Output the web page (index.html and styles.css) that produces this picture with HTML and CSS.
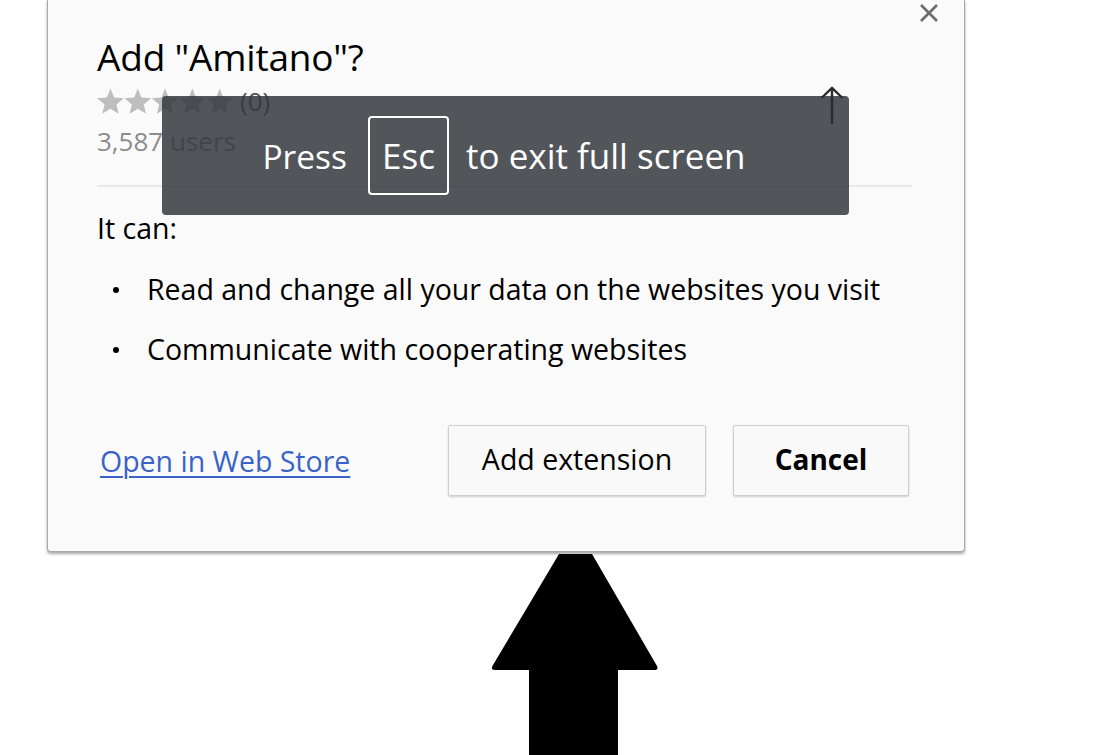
FILE: index.html
```html
<!DOCTYPE html>
<html lang="en">
<head>
<meta charset="utf-8">
<title>Add "Amitano"?</title>
<link rel="stylesheet" href="styles.css">
</head>
<body>
<div class="page">
  <div class="dialog">
    <button class="close" aria-label="Close">
      <svg width="20" height="20" viewBox="0 0 20 20"><path d="M2 2 L18 18 M18 2 L2 18" stroke="#6b6b6b" stroke-width="2.6" fill="none"/></svg>
    </button>
    <h1 class="title">Add "Amitano"?</h1>
    <div class="rating">
      <svg class="stars" width="137" height="27" viewBox="0 0 137 27">
        <g fill="#bdbdbd">
          <path d="M13.5 0.5 L17.1 9.5 L26.8 10.2 L19.4 16.4 L21.7 25.8 L13.5 20.7 L5.3 25.8 L7.6 16.4 L0.2 10.2 L9.9 9.5 Z"/>
          <path d="M13.5 0.5 L17.1 9.5 L26.8 10.2 L19.4 16.4 L21.7 25.8 L13.5 20.7 L5.3 25.8 L7.6 16.4 L0.2 10.2 L9.9 9.5 Z" transform="translate(27.3 0)"/>
          <path d="M13.5 0.5 L17.1 9.5 L26.8 10.2 L19.4 16.4 L21.7 25.8 L13.5 20.7 L5.3 25.8 L7.6 16.4 L0.2 10.2 L9.9 9.5 Z" transform="translate(54.6 0)"/>
          <path d="M13.5 0.5 L17.1 9.5 L26.8 10.2 L19.4 16.4 L21.7 25.8 L13.5 20.7 L5.3 25.8 L7.6 16.4 L0.2 10.2 L9.9 9.5 Z" transform="translate(81.9 0)"/>
          <path d="M13.5 0.5 L17.1 9.5 L26.8 10.2 L19.4 16.4 L21.7 25.8 L13.5 20.7 L5.3 25.8 L7.6 16.4 L0.2 10.2 L9.9 9.5 Z" transform="translate(109.2 0)"/>
        </g>
      </svg>
      <span class="count">(0)</span>
    </div>
    <div class="users">3,587 users</div>
    <hr class="sep">
    <p class="can">It can:</p>
    <ul class="perms">
      <li>Read and change all your data on the websites you visit</li>
      <li>Communicate with cooperating websites</li>
    </ul>
    <div class="footer">
      <a class="store" href="#">Open in Web Store</a>
      <div class="buttons">
        <button class="btn">Add extension</button>
        <button class="btn btn-bold">Cancel</button>
      </div>
    </div>

    <div class="toast">
      <span class="press">Press</span>
      <span class="key">Esc</span>
      <span class="exit">to exit full screen</span>
    </div>
    <svg class="pointer" width="24" height="40" viewBox="0 0 24 40"><path d="M12 2 V38 M1.5 12 L12 2 L22.5 12" stroke="#2b2b2b" stroke-width="2.4" fill="none"/></svg>
  </div>

  <div class="big-arrow">
    <svg width="170" height="205" viewBox="0 0 170 205"><path d="M68 2 L101 2 L166 114 Q168 118 163 118 L127 118 L127 205 L38 205 L38 118 L4 118 Q-1 118 2 113 Z" fill="#000"/></svg>
  </div>
</div>
</body>
</html>
```

FILE: styles.css
```css
* { box-sizing: border-box; }
html, body { margin: 0; padding: 0; background: #ffffff; }
body {
  font-family: "Open Sans", "Noto Sans", "Liberation Sans", sans-serif;
  color: #000;
  overflow: hidden;
  width: 1109px;
  height: 755px;
}
.page { width: 1109px; }

.dialog {
  position: relative;
  margin-left: 47px;
  width: 918px;
  height: 552px;
  background: #fafafa;
  border: 1px solid #a9a9a9;
  border-top: none;
  border-radius: 0 0 4px 4px;
  box-shadow: 0 2px 3px rgba(0,0,0,0.35);
  padding: 0 55px 0 49px;
}

.close {
  position: absolute;
  top: 2px;
  right: 24px;
  width: 22px;
  height: 22px;
  padding: 0;
  border: none;
  background: transparent;
  display: flex;
  align-items: center;
  justify-content: center;
}

.title {
  margin: 0;
  padding-top: 33px;
  font-size: 37px;
  font-weight: 400;
  line-height: 48px;
  letter-spacing: -0.2px;
}

.rating {
  display: flex;
  align-items: center;
  gap: 6px;
  height: 27px;
  margin-top: 7px;
}
.stars { display: block; }
.count { font-size: 26px; color: #555; line-height: 27px; }

.users {
  margin-top: 10px;
  font-size: 26px;
  color: #8c8c8c;
  line-height: 32px;
}

.sep {
  margin: 28px -3px 0 0;
  border: none;
  border-top: 2px solid #e8e8e8;
  height: 0;
}

.can {
  margin: 21px 0 0 0;
  font-size: 28.5px;
  line-height: 40px;
}

.perms {
  list-style: none;
  margin: 11px 0 0 0;
  padding: 0;
}
.perms li {
  position: relative;
  padding-left: 50px;
  font-size: 28.5px;
  line-height: 60px;
}
.perms li::before {
  content: "";
  position: absolute;
  left: 16px;
  top: 28px;
  width: 6px;
  height: 6px;
  border-radius: 50%;
  background: #000;
}

.footer {
  display: flex;
  align-items: center;
  justify-content: space-between;
  margin-top: 46px;
}
.store {
  margin-left: 3px;
  font-size: 28.5px;
  line-height: 40px;
  color: #3a63c9;
  text-decoration: underline;
  text-underline-offset: 4px;
  text-decoration-thickness: 1.5px;
}
.buttons { display: flex; gap: 27px; }
.btn {
  height: 71px;
  font-family: inherit;
  font-size: 28.5px;
  color: #000;
  background: #f9f9f9;
  border: 1px solid #cfcfcf;
  border-radius: 2px;
  box-shadow: 0 1px 2px rgba(0,0,0,0.18);
  padding: 0 0 3px 0;
  width: 258px;
}
.btn-bold { font-weight: 700; width: 176px; font-size: 28px; }

.toast {
  position: absolute;
  left: 114px;
  top: 96px;
  width: 687px;
  height: 119px;
  background: rgba(52, 56, 62, 0.85);
  border-radius: 4px;
  display: flex;
  align-items: center;
  justify-content: center;
  color: #fff;
  font-size: 33.5px;
  padding-right: 3px;
}
.press { margin-right: 21px; }
.exit { font-size: 35px; margin-left: 17px; }
.key {
  border: 2px solid #fff;
  border-radius: 4px;
  height: 79px;
  width: 81px;
  display: flex;
  align-items: center;
  justify-content: center;
  font-size: 35px;
  padding-bottom: 1px;
}

.pointer {
  position: absolute;
  left: 772px;
  top: 86px;
}

.big-arrow {
  margin-left: 491px;
  margin-top: 0;
  line-height: 0;
}
```
